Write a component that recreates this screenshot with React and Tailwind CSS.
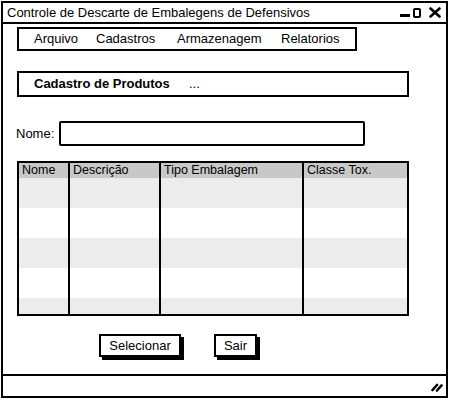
import React from 'react';

const font = { fontFamily: '"Liberation Sans", Arial, sans-serif' };

const WindowControls = () => (
  <div className="flex items-end gap-[3px] pr-[5px]">
    <span className="w-[10px] h-[3px] bg-black mb-[1px]" />
    <span className="w-[8px] h-[10px] border-2 border-black rounded-[2px]" />
    <svg width="12" height="11" viewBox="0 0 12 11" className="ml-[5px]">
      <path d="M1.5 1.5 L10.5 9.5 M10.5 1.5 L1.5 9.5" stroke="#000" strokeWidth="2.6" strokeLinecap="round" />
    </svg>
  </div>
);

const Row = ({ gray, h }) => (
  <>
    {[0, 1, 2, 3].map((i) => (
      <div
        key={i}
        className={`${gray ? 'bg-[#ececec]' : 'bg-white'} ${i > 0 ? 'border-l-2 border-black' : ''}`}
        style={{ height: h }}
      />
    ))}
  </>
);

export default function App() {
  const headers = ['Nome', 'Descrição', 'Tipo Embalagem', 'Classe Tox.'];

  return (
    <div className="w-[450px] h-[400px] bg-white text-black text-[13px]" style={font}>
      <div className="ml-px mt-px w-[447px] h-[397px] border-2 border-black flex flex-col">
        {/* title bar */}
        <div className="h-[19px] border-b-2 border-black flex items-center justify-between pl-[4px] box-content">
          <span className="leading-none">Controle de Descarte de Embalegens de Defensivos</span>
          <WindowControls />
        </div>

        {/* body */}
        <div className="flex-1 flex flex-col pl-[14px]">
          <div className="mt-[3px] w-[340px] h-[24px] border-2 border-black flex items-center pl-[15px]">
            <span className="w-[62px]">Arquivo</span>
            <span className="w-[81px]">Cadastros</span>
            <span className="w-[104px]">Armazenagem</span>
            <span>Relatorios</span>
          </div>

          <div className="mt-[20px] w-[392px] h-[26px] border-2 border-black flex items-center pl-[15px]">
            <span className="w-[155px] font-bold">Cadastro de Produtos</span>
            <span>...</span>
          </div>

          <div className="mt-[24px] flex items-center -ml-[1px]">
            <span className="w-[43px]">Nome:</span>
            <div className="w-[306px] h-[25px] border-2 border-black rounded-[2px]" />
          </div>

          <div className="mt-[15px] w-[392px] border-2 border-black grid grid-cols-[49px_91px_143px_1fr]">
            {headers.map((h, i) => (
              <div
                key={h}
                className={`h-[15px] bg-[#c8c8c8] pl-[3px] flex items-center text-[12.5px] leading-none ${i > 0 ? 'border-l-2 border-black' : ''}`}
              >
                {h}
              </div>
            ))}
            <Row gray h={30} />
            <Row h={30} />
            <Row gray h={30} />
            <Row h={30} />
            <Row gray h={16} />
          </div>

          <div className="mt-[18px] flex pl-[82px] gap-[33px]">
            <button className="w-[82px] h-[23px] border-2 border-black bg-white shadow-[3px_3px_0_#000] flex items-center justify-center">
              Selecionar
            </button>
            <button className="w-[43px] h-[23px] border-2 border-black bg-white shadow-[3px_3px_0_#000] flex items-center justify-center">
              Sair
            </button>
          </div>
        </div>

        {/* status bar */}
        <div className="h-[20px] border-t-2 border-black flex items-center justify-end pr-[3px] box-content">
          <svg width="12" height="12" viewBox="0 0 12 12">
            <path d="M1.5 10 L6 5 M6 10.5 L10.5 5.5" stroke="#000" strokeWidth="2.6" strokeLinecap="round" />
          </svg>
        </div>
      </div>
    </div>
  );
}
